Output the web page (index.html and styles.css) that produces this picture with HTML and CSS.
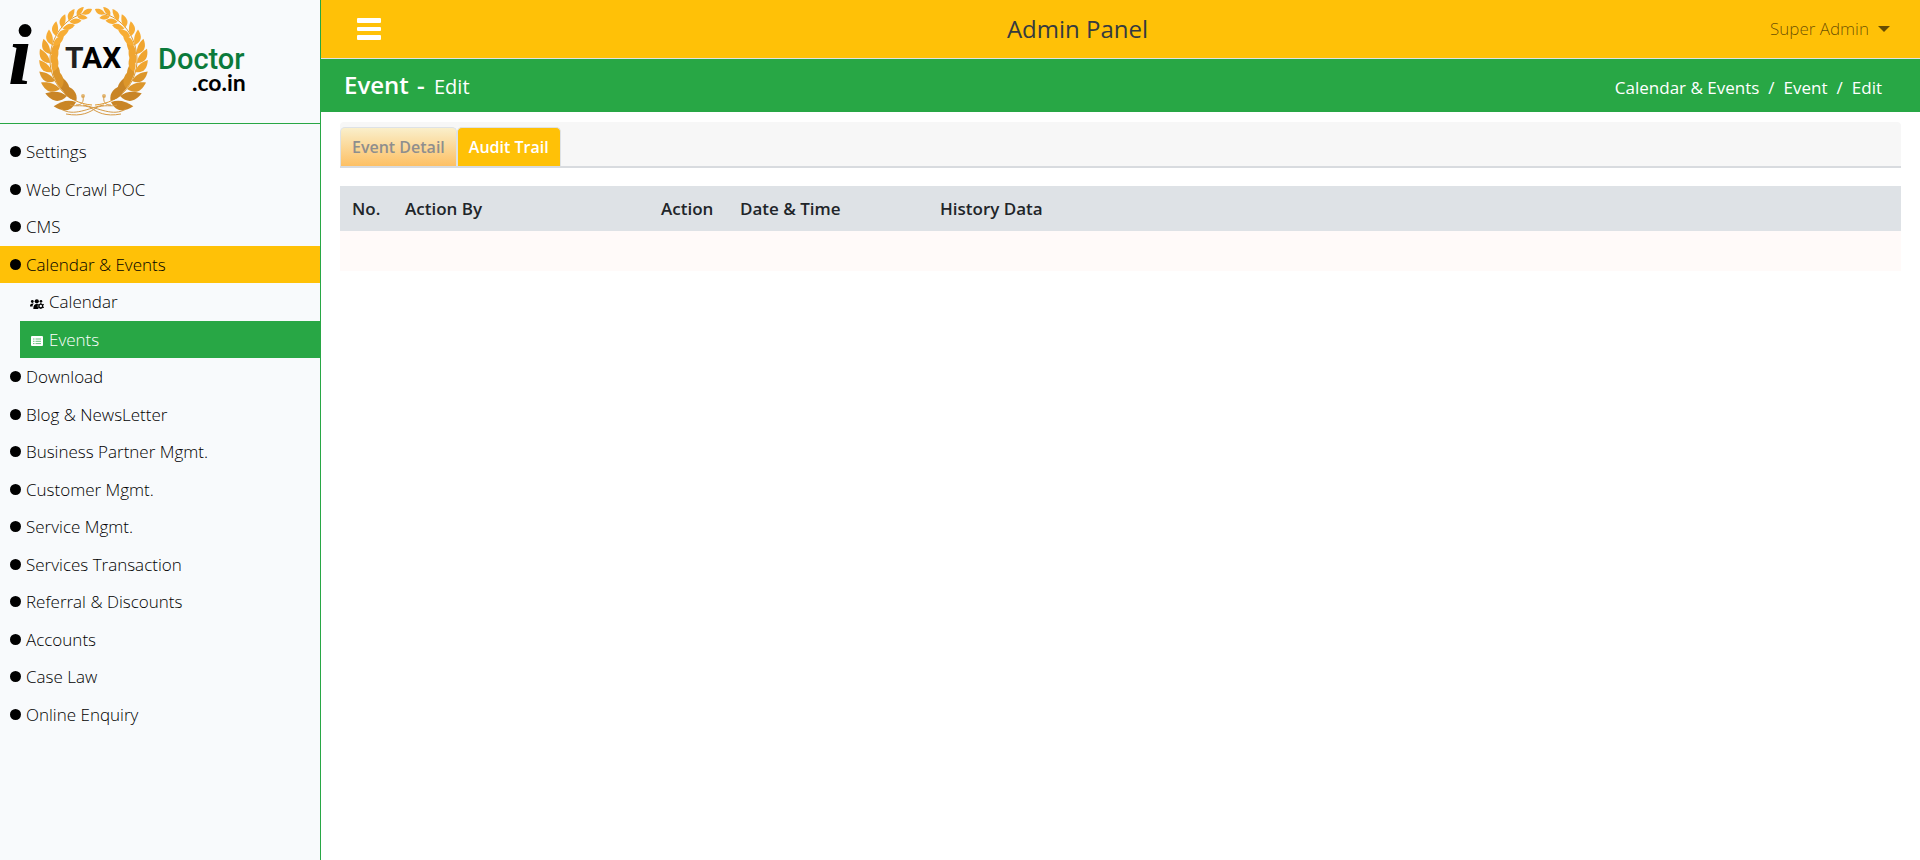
FILE: index.html
```html
<!DOCTYPE html>
<html lang="en">
<head>
<meta charset="utf-8">
<title>Admin Panel - Event</title>
<link rel="stylesheet" href="styles.css">
</head>
<body>
<div class="layout">
  <aside class="sidebar">
    <a class="brand" href="#" aria-label="iTAX Doctor.co.in">
      <svg class="logo" viewBox="0 0 256 122" width="256" height="122">
        <defs>
          <g id="sprig">
            <path d="M0 0C-9 -1 -11 -7 -9 -15C-3 -11 0 -6 0 0Z"/>
            <path d="M1 0C0 -8 3 -12 9 -14C10 -6 7 -1 1 0Z"/>
          </g>
          <g id="branch">
            <path d="M92 105C66 103 50 82 50 60C50 38 64 17 86 13" fill="none" stroke="#e09a30"/>
            <g fill="#c98526">
              <use href="#sprig" transform="translate(76 102) rotate(-70) scale(1.3)"/>
              <use href="#sprig" transform="translate(67 96) rotate(-52) scale(1.25)"/>
            </g>
            <g fill="#dc962b">
              <use href="#sprig" transform="translate(60 89) rotate(-40) scale(1.15)"/>
              <use href="#sprig" transform="translate(55 81) rotate(-28) scale(1.05)"/>
            </g>
            <g fill="#f0a530">
              <use href="#sprig" transform="translate(52 72) rotate(-16)"/>
              <use href="#sprig" transform="translate(50 63) rotate(-4)"/>
              <use href="#sprig" transform="translate(50 54) rotate(8) scale(.95)"/>
            </g>
            <g fill="#f7ad35">
              <use href="#sprig" transform="translate(52 45) rotate(20) scale(.9)"/>
              <use href="#sprig" transform="translate(56 36) rotate(32) scale(.85)"/>
              <use href="#sprig" transform="translate(62 28) rotate(44) scale(.8)"/>
              <use href="#sprig" transform="translate(69 21) rotate(56) scale(.75)"/>
              <use href="#sprig" transform="translate(77 16) rotate(68) scale(.65)"/>
              <path d="M82 14C84 9 88 8 92 9C91 13 88 16 82 14Z"/>
            </g>
            <circle cx="83" cy="96" r="2" fill="#e2b673"/>
            <path d="M83 96C84 102 82 105 76 105M92 108C82 104 76 107 70 105M61 109C74 117 88 108 104 105M66 114C82 117 90 112 96 108" fill="none" stroke="#d69a45"/>
          </g>
        </defs>
        <use href="#branch"/>
        <use href="#branch" transform="translate(187 0) scale(-1 1)"/>
        <text class="logo-i" x="8" y="84">i</text>
        <text class="logo-tax" x="65" y="68"><tspan fill="#222">T</tspan>AX</text>
        <text class="logo-doctor" x="158" y="69">Doctor</text>
        <text class="logo-domain" x="192" y="91">.co.in</text>
      </svg>
    </a>
    <nav class="menu">
      <a class="item" href="#"><span class="dot"></span>Settings</a>
      <a class="item" href="#"><span class="dot"></span>Web Crawl POC</a>
      <a class="item" href="#"><span class="dot"></span>CMS</a>
      <a class="item open" href="#"><span class="dot"></span>Calendar &amp; Events</a>
      <div class="submenu">
        <a class="item" href="#">
          <svg class="icon" viewBox="0 0 14 10" width="14" height="10" fill="currentColor"><circle cx="2.3" cy="2.5" r="1.4"/><circle cx="6.8" cy="2.3" r="2.1"/><circle cx="11" cy="2.2" r="1.3"/><path d="M0 7.5C0 5 1 4.4 3.8 4.6C2.8 5.6 2.7 6.4 2.6 7.5ZM3.3 10C3.3 6.5 4.5 5 6.8 5L8.3 5.3C7.2 7 7.7 9 8.7 10Z"/><circle cx="10.8" cy="7" r="1.9" fill="none" stroke="currentColor" stroke-width="1.4"/><path d="M10.8 3.6v1.3M10.8 9v1M7.7 5.3l1.2.7M12.6 8l1.2.7M7.7 8.7l1.2-.7M12.6 6l1.2-.7" stroke="currentColor"/></svg>Calendar</a>
        <a class="item active" href="#">
          <svg class="icon" viewBox="0 0 14 10" width="14" height="10"><rect x="1" width="12" height="10" rx="1" fill="#fff"/><path d="M3 3h1.5M3 5.3h1.5M3 7.6h1.5M5.5 3H11M5.5 5.3H11M5.5 7.6H11" stroke="#28a745" stroke-width="1" opacity=".7"/></svg>Events</a>
      </div>
      <a class="item" href="#"><span class="dot"></span>Download</a>
      <a class="item" href="#"><span class="dot"></span>Blog &amp; NewsLetter</a>
      <a class="item" href="#"><span class="dot"></span>Business Partner Mgmt.</a>
      <a class="item" href="#"><span class="dot"></span>Customer Mgmt.</a>
      <a class="item" href="#"><span class="dot"></span>Service Mgmt.</a>
      <a class="item" href="#"><span class="dot"></span>Services Transaction</a>
      <a class="item" href="#"><span class="dot"></span>Referral &amp; Discounts</a>
      <a class="item" href="#"><span class="dot"></span>Accounts</a>
      <a class="item" href="#"><span class="dot"></span>Case Law</a>
      <a class="item" href="#"><span class="dot"></span>Online Enquiry</a>
    </nav>
  </aside>
  <div class="page">
    <header class="topbar">
      <button class="toggle" type="button" aria-label="Toggle menu">
        <svg viewBox="0 0 24 22" width="24" height="22" fill="#fff"><rect width="24" height="5" rx="1"/><rect y="9" width="24" height="4" rx="1"/><rect y="17" width="24" height="5" rx="1"/></svg>
      </button>
      <h1 class="title">Admin Panel</h1>
      <button class="user" type="button">Super Admin<span class="caret"></span></button>
    </header>
    <div class="pagebar">
      <h2 class="heading">Event <span>-</span> <small>Edit</small></h2>
      <nav class="crumbs" aria-label="Breadcrumb">
        <a href="#">Calendar &amp; Events</a><span>/</span><a href="#">Event</a><span>/</span><span>Edit</span>
      </nav>
    </div>
    <main class="content">
      <div class="tabs" role="tablist">
        <button class="tab" type="button" role="tab" aria-selected="false">Event Detail</button>
        <button class="tab selected" type="button" role="tab" aria-selected="true">Audit Trail</button>
      </div>
      <table class="audit">
        <colgroup><col class="c-no"><col class="c-by"><col class="c-action"><col class="c-date"><col></colgroup>
        <thead><tr><th>No.</th><th>Action By</th><th>Action</th><th>Date &amp; Time</th><th>History Data</th></tr></thead>
        <tbody><tr><td colspan="5"></td></tr></tbody>
      </table>
    </main>
  </div>
</div>
</body>
</html>
```
FILE: styles.css
```css
* { box-sizing: border-box; }
body {
  margin: 0;
  font-family: "Open Sans", "Noto Sans", sans-serif;
  font-size: 17px;
  line-height: 1.5;
  color: #212529;
  background: #fff;
}
a { color: inherit; text-decoration: none; }
button { font: inherit; border: 0; background: none; padding: 0; cursor: pointer; }

.layout { display: flex; min-height: 100vh; }
.sidebar {
  flex: 0 0 321px;
  background: #f8fafc;
  border-right: 1px solid #28a745;
}
.brand { display: block; border-bottom: 1px solid #28a745; }
.logo { display: block; margin-bottom: 1px; }
.logo-i { font: italic bold 86px "Liberation Serif", serif; }
.logo-tax { font: bold 30px Roboto, sans-serif; }
.logo-doctor { font: 500 29px Roboto, sans-serif; fill: #0b7a3b; }
.logo-domain { font: bold 23px Lato, sans-serif; }

.menu { padding-top: 9px; color: #000; font-weight: 300; }
.item { display: flex; align-items: center; padding: 6px 10px; }
.dot {
  width: 11px;
  height: 11px;
  margin-right: 5px;
  border-radius: 50%;
  background: #000;
}
.open { background: #ffc107; }
.submenu { margin-left: 20px; }
.icon { margin: 4px 5px 0 0; }
.active { background: #28a745; color: #fff; }

.page { flex: 1; min-width: 0; }
.topbar {
  display: flex;
  align-items: center;
  justify-content: space-between;
  height: 59px;
  padding: 0 30px 0 36px;
  background: #ffc107;
  border-bottom: 1px solid #dee2e6;
}
.toggle { padding-right: 4px; }
.toggle svg { display: block; }
.title { margin: 0; font-size: 24px; font-weight: 500; color: #343a40; }
.user {
  display: flex;
  align-items: center;
  gap: 9px;
  font-weight: 300;
  color: rgba(0, 0, 0, .6);
}
.caret { border: 6px solid transparent; border-top-color: currentColor; border-bottom: 0; }

.pagebar {
  display: flex;
  align-items: center;
  justify-content: space-between;
  height: 53px;
  padding: 0 38px 0 23px;
  background: #28a745;
  color: #fff;
}
.heading { margin: 0; padding-bottom: 2px; font-size: 24px; font-weight: 600; }
.heading span { margin: 0 3px 0 2px; }
.heading small { font-size: 20px; font-weight: 400; }
.crumbs { display: flex; gap: 9px; padding-top: 5px; }

.content { padding: 10px 19px 0; }
.tabs {
  display: flex;
  height: 46px;
  padding-top: 5px;
  background: #f7f7f7;
  border-bottom: 2px solid #d8dbdf;
  border-radius: 4px 4px 0 0;
}
.tab {
  padding: 0 11px;
  font-size: 16px;
  font-weight: 600;
  color: #8e8e8e;
  background: linear-gradient(#faefcb, #fdc064);
  border: 1px solid #dee2e6;
  border-bottom: 0;
  border-radius: 5px 5px 0 0;
}
.tab.selected { color: #fff; background: #ffc107; }

.audit { width: 100%; margin-top: 18px; border-collapse: collapse; table-layout: fixed; }
.c-no { width: 53px; }
.c-by { width: 256px; }
.c-action { width: 79px; }
.c-date { width: 200px; }
.audit th {
  height: 45px;
  padding: 0 12px;
  text-align: left;
  font-weight: 600;
  background: #dee2e6;
}
.audit td { height: 40px; padding: 0; background: #fffaf9; }
```
